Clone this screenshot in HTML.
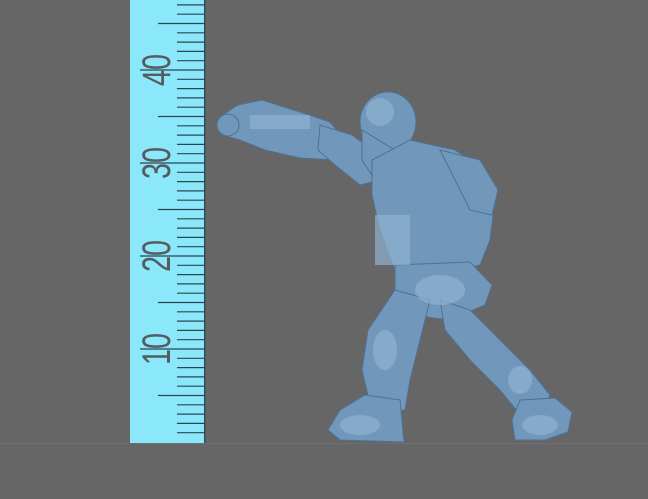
<!DOCTYPE html>
<html><head><meta charset="utf-8"><style>
html,body{margin:0;padding:0;background:#666666;}
svg{display:block}
</style></head><body>
<svg width="648" height="499" viewBox="0 0 648 499" xmlns="http://www.w3.org/2000/svg">
<rect width="648" height="499" fill="#666666"/>
<line x1="0" y1="443.5" x2="648" y2="443.5" stroke="#6e6e6e" stroke-width="1"/>
<!-- ruler -->
<rect x="130" y="0" width="75" height="443" fill="#8ae8fa"/>
<rect x="204" y="0" width="1.5" height="443" fill="#2f4f58"/>
<g stroke="#2c4650" stroke-width="1.2" id="ticks">
</g>
<g font-family="'Liberation Sans',sans-serif" font-size="40" fill="#555b5e" text-anchor="middle">
<text transform="translate(170,70) rotate(-90) scale(0.72,1)">40</text>
<text transform="translate(170,163) rotate(-90) scale(0.72,1)">30</text>
<text transform="translate(170,256) rotate(-90) scale(0.72,1)">20</text>
<text transform="translate(170,349) rotate(-90) scale(0.72,1)">10</text>
</g>
<!-- figure -->
<g fill="#7198bb" stroke="#4f7193" stroke-width="1">
<polygon points="218,118 238,105 262,100 300,112 330,122 345,140 336,160 300,158 265,150 240,140 222,135"/>
<circle cx="228" cy="125" r="11"/>
<polygon points="320,125 352,135 372,150 380,180 360,185 335,165 318,150"/>
<ellipse cx="388" cy="122" rx="28" ry="30"/>
<polygon points="362,130 395,150 395,175 375,180 362,160"/>
<polygon points="372,160 410,140 455,150 485,170 495,200 490,240 480,265 440,275 395,270 380,230 372,195"/>
<polygon points="440,150 480,160 498,190 492,215 470,210"/>
<polygon points="395,265 470,262 492,285 485,305 450,320 410,315 395,295"/>
<polygon points="395,290 430,300 420,340 410,380 405,410 372,412 362,370 368,330"/>
<polygon points="340,410 365,395 400,400 404,442 340,440 328,430"/>
<polygon points="440,300 470,310 500,340 530,370 550,395 540,415 518,412 500,390 470,360 445,330"/>
<polygon points="520,400 555,398 572,412 568,432 545,440 515,440 512,420"/>
</g>
<g fill="#8fb2d0" opacity="0.7">
<ellipse cx="380" cy="112" rx="14" ry="14"/>
<rect x="375" y="215" width="35" height="50"/>
<ellipse cx="440" cy="290" rx="25" ry="15"/>
<ellipse cx="385" cy="350" rx="12" ry="20"/>
<ellipse cx="520" cy="380" rx="12" ry="14"/>
<ellipse cx="360" cy="425" rx="20" ry="10"/>
<ellipse cx="540" cy="425" rx="18" ry="10"/>
<rect x="250" y="115" width="60" height="14"/>
</g>
<script>
(function(){var g=document.getElementById('ticks');var ns='http://www.w3.org/2000/svg';
for(var i=1;i<=47;i++){var y=442-i*9.3;if(y<0)break;var x1=(i%10==0)?140:((i%5==0)?158:177);
var l=document.createElementNS(ns,'line');l.setAttribute('x1',x1);l.setAttribute('x2',204);l.setAttribute('y1',y.toFixed(1));l.setAttribute('y2',y.toFixed(1));g.appendChild(l);}})();
</script>
</svg>
</body></html>
